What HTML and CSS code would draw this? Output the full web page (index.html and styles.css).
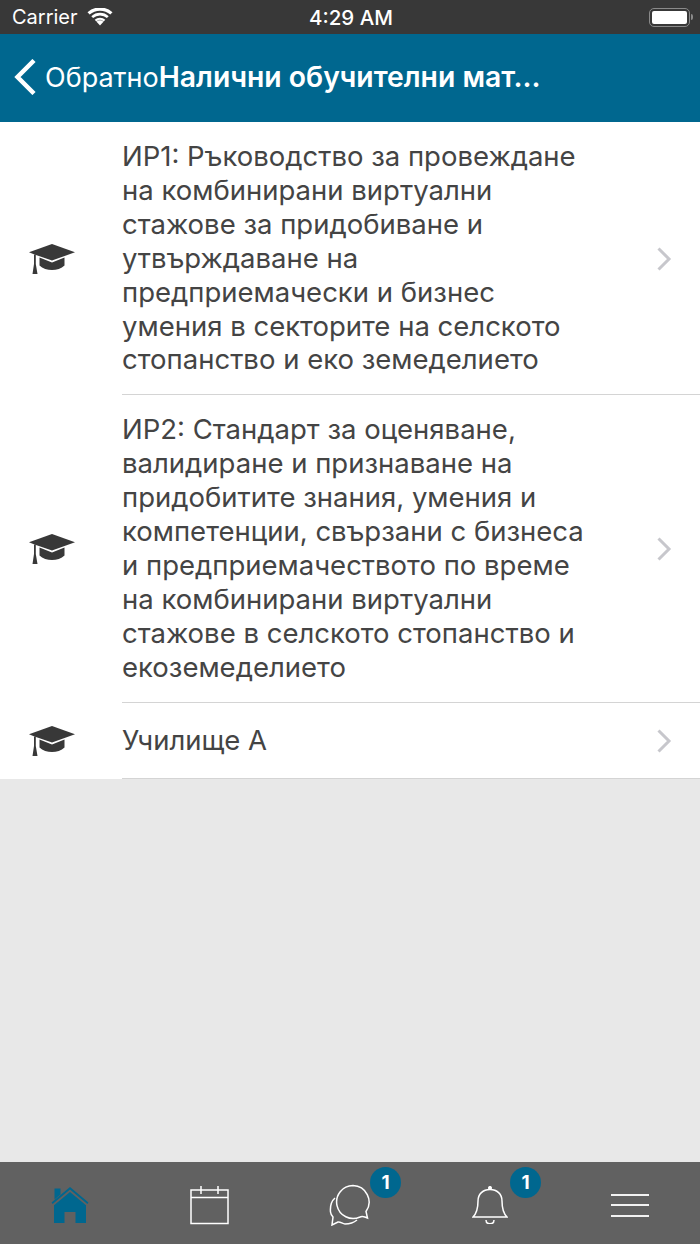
FILE: index.html
```html
<!DOCTYPE html>
<html lang="bg">
<head>
  <meta charset="UTF-8" />
  <meta name="viewport" content="width=device-width, initial-scale=1" />
  <title>Налични обучителни материали</title>
  <link rel="stylesheet" href="styles.css">
</head>
<body>

<div class="statusbar">
  <div class="status-left">
    <span>Carrier</span>
    <svg class="wifi" viewBox="0 0 26 18" width="26" height="18">
      <path d="M13 17.500l-3.500-3.800a5 5 0 0 1 7 0z" fill="#fff"/>
      <path d="M7.700 11.800a8 8 0 0 1 10.600 0l-1.600 1.700a5.600 5.600 0 0 0-7.400 0z" fill="#fff"/>
      <path d="M4.300 8.200a13 13 0 0 1 17.400 0l-1.800 1.900a10.300 10.300 0 0 0-13.800 0z" fill="#fff"/>
      <path d="M0.500 4.300a18.500 18.500 0 0 1 25 0l-2.200 2.300a15.500 15.500 0 0 0-20.600 0z" fill="#fff"/>
    </svg>
  </div>
  <div class="status-time">4:29 AM</div>
  <div class="status-right">
    <div class="battery"><div class="battery-fill"></div></div>
    <div class="battery-cap"></div>
  </div>
</div>

<header class="navbar">
  <svg class="back-icon" viewBox="0 0 22 36" width="22" height="36">
    <path d="M20 1.500L3.500 18 20 34.500" fill="none" stroke="#fff" stroke-width="4.500"/>
  </svg>
  <span class="back-label">Обратно</span>
  <h1 class="nav-title">Налични обучителни мат...</h1>
</header>

<main class="content">
  <ul class="list">
    <li class="list-row">
      <div class="row-icon">
        <svg viewBox="0 0 46 32" width="46" height="32"><use href="#cap"/></svg>
      </div>
      <div class="row-body">
        <p class="row-text">ИР1: Ръководство за провеждане на комбинирани виртуални стажове за придобиване и утвърждаване на предприемачески и бизнес умения в секторите на селското стопанство и еко земеделието</p>
        <svg class="chevron" viewBox="0 0 16 26" width="16" height="26"><path d="M2.500 2.500L13 13 2.500 23.500" fill="none" stroke="#c7c7cc" stroke-width="3"/></svg>
      </div>
    </li>
    <li class="list-row">
      <div class="row-icon">
        <svg viewBox="0 0 46 32" width="46" height="32"><use href="#cap"/></svg>
      </div>
      <div class="row-body">
        <p class="row-text">ИР2: Стандарт за оценяване, валидиране и признаване на придобитите знания, умения и компетенции, свързани с бизнеса и предприемачеството по време на комбинирани виртуални стажове в селското стопанство и екоземеделието</p>
        <svg class="chevron" viewBox="0 0 16 26" width="16" height="26"><path d="M2.500 2.500L13 13 2.500 23.500" fill="none" stroke="#c7c7cc" stroke-width="3"/></svg>
      </div>
    </li>
    <li class="list-row">
      <div class="row-icon">
        <svg viewBox="0 0 46 32" width="46" height="32"><use href="#cap"/></svg>
      </div>
      <div class="row-body">
        <p class="row-text">Училище А</p>
        <svg class="chevron" viewBox="0 0 16 26" width="16" height="26"><path d="M2.500 2.500L13 13 2.500 23.500" fill="none" stroke="#c7c7cc" stroke-width="3"/></svg>
      </div>
    </li>
  </ul>
</main>

<nav class="tabbar">
  <div class="tab">
    <svg viewBox="0 0 38 38" width="38" height="38">
      <path d="M19 1L0.500 16.500l1.200 1.400L19 3.500l17.300 14.400 1.200-1.400L19 1z" fill="#00678f"/>
      <path d="M3.500 2.500h6v6l-6 5z" fill="#00678f"/>
      <path d="M19 6L3 19.300V37h10.500V26h11v11H35V19.300z" fill="#00678f"/>
    </svg>
  </div>
  <div class="tab">
    <svg viewBox="0 0 40 40" width="40" height="40" fill="none" stroke="#fff" stroke-width="1.500">
      <rect x="1" y="5" width="37" height="33.500"/>
      <path d="M1 12.500h37M11 1v8M28 1v8"/>
    </svg>
  </div>
  <div class="tab">
    <svg viewBox="0 0 44 42" width="44" height="42" fill="none" stroke="#fff" stroke-width="1.500">
      <path d="M7 14C3.500 17 2 22 2.500 28c.2 2 1 3.500 2.500 5L4 41l6-3c2.500-.5 4.500 2 7 2 5 0 9-1.500 12-4"/>
      <path d="M25 1.500a16.500 16.500 0 1 0 7 31.500c2.500-1.500 4.500 0 7.500 1L38 27.500A16.500 16.500 0 0 0 25 1.500z"/>
    </svg>
    <span class="badge">1</span>
  </div>
  <div class="tab">
    <svg viewBox="0 0 36 38" width="36" height="38" fill="none" stroke="#fff" stroke-width="1.500">
      <circle cx="18" cy="2" r="1.300" fill="#fff"/>
      <path d="M1 31c4-4 5-8 5-16C6 8 11 3.500 18 3.500S30 8 30 15c0 8 1 12 5 16z"/>
      <path d="M14 34c0 5 8 5 8 0"/>
    </svg>
    <span class="badge">1</span>
  </div>
  <div class="tab">
    <div class="hamburger"><span></span><span></span><span></span></div>
  </div>
</nav>

<svg class="sprites" width="0" height="0">
  <symbol id="cap" viewBox="0 0 46 32">
    <path d="M23 1L0 9.300l5.500 2.200L23 17.500 46 9.300z" fill="#383838"/>
    <path d="M10.500 14.500l12.500 5 12.500-5v8c-3 3-8 4.500-12.500 4.500S13.500 25.500 10.500 22.500z" fill="#383838"/>
    <path d="M5 11.500h1.800v9.500L8.500 31H3.500l1.500-10z" fill="#383838"/>
  </symbol>
</svg>

</body>
</html>
```

FILE: styles.css
```css
/* Reset */
* {
  box-sizing: border-box;
}

html, body {
  height: 100%;
}

body {
  font-family: 'Inter', 'Noto Sans', sans-serif;
  margin: 0;
  background: #e8e8e8;
  color: #444;
  display: flex;
  flex-direction: column;
  min-height: 100vh;
  overflow: hidden;
}

/* Status bar */
.statusbar {
  height: 34px;
  flex-shrink: 0;
  background: #383838;
  color: #fff;
  display: grid;
  grid-template-columns: 1fr auto 1fr;
  align-items: center;
  padding: 0 7px 0 12px;
  font-size: 20px;
}

.status-left {
  display: flex;
  align-items: center;
  gap: 9px;
}

.status-time {
  font-size: 20.500px;
  font-weight: 500;
  margin-right: 3px;
}

.status-right {
  display: flex;
  justify-content: flex-end;
  align-items: center;
  gap: 1px;
}

.battery {
  width: 41px;
  height: 19px;
  border: 1.500px solid #8a8a8a;
  border-radius: 5px;
  padding: 2px;
}

.battery-fill {
  height: 100%;
  background: #fff;
  border-radius: 2px;
}

.battery-cap {
  width: 2px;
  height: 6px;
  background: #8a8a8a;
  border-radius: 0 2px 2px 0;
}

/* Nav */
.navbar {
  height: 88px;
  flex-shrink: 0;
  background: #00678f;
  color: #fff;
  display: flex;
  align-items: center;
  padding: 0 0 2px 14px;
  font-size: 27px;
}

.back-icon {
  margin-right: 9px;
}

.nav-title {
  margin: 0;
  font-size: 28.300px;
  font-weight: 600;
}

/* Lista */
.content {
  flex-grow: 1;
}

.list {
  list-style: none;
  margin: 0;
  padding: 0;
  background: #fff;
}

.list-row {
  display: flex;
  align-items: stretch;
}

.row-icon {
  width: 122px;
  flex-shrink: 0;
  padding-left: 29px;
  display: flex;
  align-items: center;
}

.row-body {
  flex-grow: 1;
  display: flex;
  align-items: center;
  min-height: 76px;
  padding: 18px 28px 17.100px 0;
  border-bottom: 1px solid #d4d4d4;
}

.row-text {
  margin: 0;
  flex-grow: 1;
  max-width: 470px;
  font-size: 27.500px;
  line-height: 33.900px;
  color: #444;
}

.chevron {
  margin-left: auto;
  flex-shrink: 0;
}

/* Tabs */
.tabbar {
  height: 82px;
  flex-shrink: 0;
  background: #616161;
  display: grid;
  grid-template-columns: repeat(5, 1fr);
}

.tab {
  position: relative;
  display: flex;
  justify-content: center;
  align-items: center;
  padding-top: 4px;
}

.badge {
  position: absolute;
  top: 5px;
  left: 50%;
  margin-left: 20px;
  width: 31px;
  height: 31px;
  border-radius: 50%;
  background: #00678f;
  color: #fff;
  font-size: 19px;
  font-weight: 700;
  display: flex;
  justify-content: center;
  align-items: center;
}

.hamburger {
  width: 38px;
  display: flex;
  flex-direction: column;
  gap: 8.500px;
}

.hamburger span {
  height: 2px;
  background: #f2f2f2;
}

.sprites {
  position: absolute;
}
```
